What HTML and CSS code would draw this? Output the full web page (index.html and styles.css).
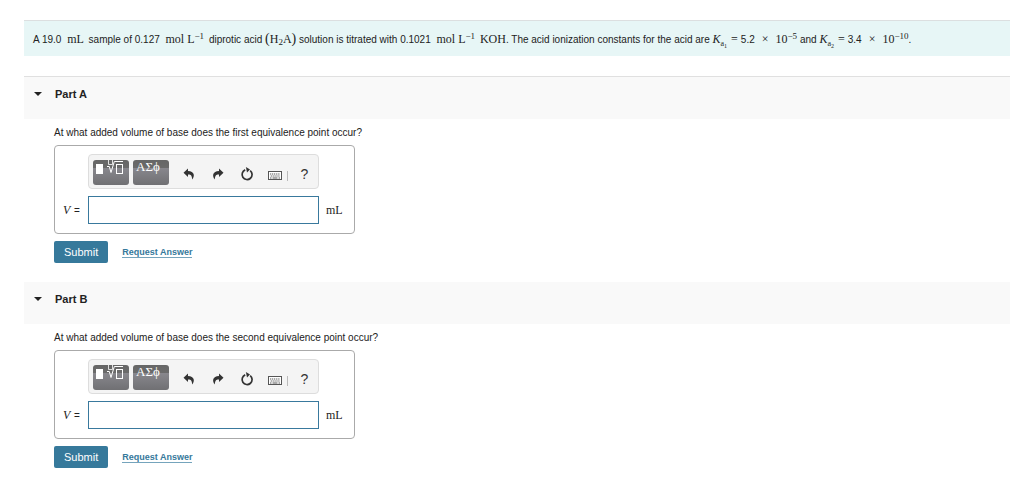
FILE: index.html
```html
<!DOCTYPE html>
<html lang="en">
<head>
<meta charset="utf-8">
<title>Titration of a diprotic acid</title>
<link rel="stylesheet" href="styles.css">
</head>
<body>
<svg class="symbols" aria-hidden="true">
  <symbol id="undo" viewBox="0 0 12 12"><path d="M5 .5 0.5 4.7 5 9V6.5C7.6 6.3 9 7.4 9.2 11.5 12 8 11.6 3.2 5 2.9Z"/></symbol>
  <symbol id="redo" viewBox="0 0 12 12"><path d="M7 .5 11.5 4.7 7 9V6.5C4.4 6.3 3 7.4 2.8 11.5 0 8 .4 3.2 7 2.9Z"/></symbol>
  <symbol id="reset" viewBox="0 0 14 14"><path d="M10.2 3.6A5 5 0 1 1 5.2 2.9" fill="none" stroke="currentColor" stroke-width="1.7"/><path d="M5.9 0 10 2.4 7 5.6Z"/></symbol>
  <symbol id="keyboard" viewBox="0 0 16 10"><rect x="1.5" y=".5" width="13" height="8" fill="#fff" stroke="#555"/><path d="M3 3h10M3.7 5h9" fill="none" stroke="#555" stroke-width="1.1" stroke-dasharray="1.2 .7"/><path d="M3 7h1.5M5.5 7h5M11.5 7h1.5" fill="none" stroke="#555"/></symbol>
  <symbol id="template" viewBox="0 0 36 25"><rect x="3" y="4" width="7" height="10" fill="#fff"/><g fill="none" stroke="#fff"><path d="M14 6.5h2.3L18 12.5 21.3 1.5H30"/><path d="M15.5 0v4.5h4V0" stroke-width=".8"/><rect x="23.5" y="4.5" width="6" height="9"/></g></symbol>
</svg>
<main class="page">
  <p class="problem">A 19.0 <span class="math unit">mL</span> sample of 0.127 <span class="math unit">mol L<sup>−1</sup></span> diprotic acid <span class="math"><span class="paren">(</span>H<sub>2</sub>A<span class="paren">)</span></span> solution is titrated with 0.1021 <span class="math unit">mol L<sup>−1</sup></span> <span class="math">KOH</span>. The acid ionization constants for the acid are <span class="math"><i>K</i><sub class="low">a<small>1</small></sub><span class="rel">=</span></span>5.2<span class="math times">×</span><span class="math">10<sup>−5</sup></span> and <span class="math"><i>K</i><sub class="low">a<small>2</small></sub><span class="rel">=</span></span>3.4<span class="math times">×</span><span class="math">10<sup>−10</sup></span>.</p>

  <section class="part ruled">
    <h2 class="part-title"><svg class="caret" viewBox="0 0 8 4"><path d="M0 0h8L4 4Z"/></svg>Part A</h2>
    <form class="part-body">
      <p class="question">At what added volume of base does the first equivalence point occur?</p>
      <div class="answer">
        <div class="toolbar">
          <button class="palette" type="button" aria-label="Templates"><svg class="template"><use href="#template"/></svg></button>
          <button class="palette greek" type="button">ΑΣϕ</button>
          <button class="tool first" type="button" aria-label="Undo"><svg class="arrow"><use href="#undo"/></svg></button>
          <button class="tool" type="button" aria-label="Redo"><svg class="arrow"><use href="#redo"/></svg></button>
          <button class="tool" type="button" aria-label="Reset"><svg class="reset"><use href="#reset"/></svg></button>
          <button class="tool keys" type="button" aria-label="Keyboard shortcuts"><svg class="keyboard"><use href="#keyboard"/></svg></button>
          <button class="tool help" type="button">?</button>
        </div>
        <label class="variable" for="volume-a"><i>V</i> =</label>
        <input class="value" id="volume-a" type="text">
        <span class="math answer-unit">mL</span>
      </div>
      <div class="actions">
        <button class="submit" type="submit">Submit</button>
        <a class="request" href="#">Request Answer</a>
      </div>
    </form>
  </section>

  <section class="part">
    <h2 class="part-title"><svg class="caret" viewBox="0 0 8 4"><path d="M0 0h8L4 4Z"/></svg>Part B</h2>
    <form class="part-body">
      <p class="question">At what added volume of base does the second equivalence point occur?</p>
      <div class="answer">
        <div class="toolbar">
          <button class="palette" type="button" aria-label="Templates"><svg class="template"><use href="#template"/></svg></button>
          <button class="palette greek" type="button">ΑΣϕ</button>
          <button class="tool first" type="button" aria-label="Undo"><svg class="arrow"><use href="#undo"/></svg></button>
          <button class="tool" type="button" aria-label="Redo"><svg class="arrow"><use href="#redo"/></svg></button>
          <button class="tool" type="button" aria-label="Reset"><svg class="reset"><use href="#reset"/></svg></button>
          <button class="tool keys" type="button" aria-label="Keyboard shortcuts"><svg class="keyboard"><use href="#keyboard"/></svg></button>
          <button class="tool help" type="button">?</button>
        </div>
        <label class="variable" for="volume-b"><i>V</i> =</label>
        <input class="value" id="volume-b" type="text">
        <span class="math answer-unit">mL</span>
      </div>
      <div class="actions">
        <button class="submit" type="submit">Submit</button>
        <a class="request" href="#">Request Answer</a>
      </div>
    </form>
  </section>
</main>
</body>
</html>
```
FILE: styles.css
```css
* { box-sizing: border-box; }
body {
  margin: 0;
  background: #fff;
  color: #222;
  font: 10px/14px "Liberation Sans", Arial, sans-serif;
}
button { border: 0; padding: 0; font: inherit; color: inherit; background: none; cursor: pointer; }
svg { display: block; fill: currentColor; }
.symbols { display: none; }
.page { padding: 20px 14px 0 24px; }

.problem {
  margin: 0 0 20px;
  padding: 12px 9px 9px;
  border-top: 1px solid #dcdfe0;
  background: #e7f6f6;
}
.math { font-family: "Liberation Serif", "Times New Roman", serif; font-size: 12px; line-height: 10px; white-space: nowrap; }
.unit { margin: 0 2px 0 3px; }
.math sup, .math sub { font-size: 9px; line-height: 0; }
.math sup { vertical-align: 4px; }
.math sub { vertical-align: -2px; }
.math .low { font-size: 8px; vertical-align: -3px; }
.math small { font-size: 6px; vertical-align: -2px; }
.math .paren { font-size: 14px; line-height: 0; }
.rel { margin: 0 3px 0 4px; }
.math.times { margin: 0 7px; }

.ruled { border-top: 1px solid #e0e0e0; }
.part-title {
  display: flex;
  align-items: center;
  gap: 13px;
  margin: 0;
  padding: 10px 10px 18px;
  background: #f9f9f9;
  font-size: 11px;
  line-height: 14px;
}
.caret { width: 8px; height: 4px; }
.part-body { padding: 7px 0 19px 30px; }
.question { margin: 0 0 5px; }

.answer {
  display: grid;
  grid-template-columns: 25px 231px auto;
  row-gap: 7px;
  align-items: center;
  width: fit-content;
  padding: 8px 11px 9px 8px;
  border: 1px solid #aaa;
  border-radius: 4px;
}
.toolbar {
  grid-column: 2;
  display: flex;
  align-items: center;
  padding: 5px 0 3px 4px;
  gap: 4px;
  height: 35px;
  border: 1px solid #ddd;
  border-radius: 4px;
  background: #f4f4f4;
}
.palette {
  flex: none;
  width: 36px;
  height: 25px;
  border-radius: 3px;
  background: linear-gradient(#666 0, #6b6b6b 8px, #88878d 8px, #707073 100%);
  color: #fff;
}
.template { width: 36px; height: 25px; }
.greek { padding: 0 0 12px 3px; font: 13px/13px "Liberation Serif", serif; text-align: left; }
.tool { display: flex; flex: none; justify-content: center; width: 25px; padding-top: 3px; color: #333; }
.first { margin-left: 3px; }
.arrow { width: 12px; height: 12px; }
.reset { width: 14px; height: 14px; }
.keyboard { width: 16px; height: 10px; }
.keys { padding: 6px 0 0; border-right: 1px solid #bbb; border-image: linear-gradient(transparent 40%, #bbb 40%) 1; }
.help { font-size: 14px; }
.variable { grid-column: 1; white-space: nowrap; }
.variable i { margin-right: 1px; font: italic 12px/14px "Liberation Serif", serif; }
.value {
  width: 100%;
  height: 28px;
  padding: 0 6px;
  border: 1px solid #39799d;
  background: #fff;
  font: 12px "Liberation Sans", Arial, sans-serif;
}
.answer-unit { padding-left: 7px; }

.actions { display: flex; align-items: center; gap: 14px; margin-top: 7px; }
.submit {
  padding: 4px 10px;
  border-radius: 2px;
  background: #36799b;
  color: #fff;
  font-size: 11px;
  line-height: 14px;
}
.request { color: #36799b; font-size: 9px; font-weight: bold; line-height: 10px; border-bottom: 1px solid #75a4bc; text-decoration: none; }
```
